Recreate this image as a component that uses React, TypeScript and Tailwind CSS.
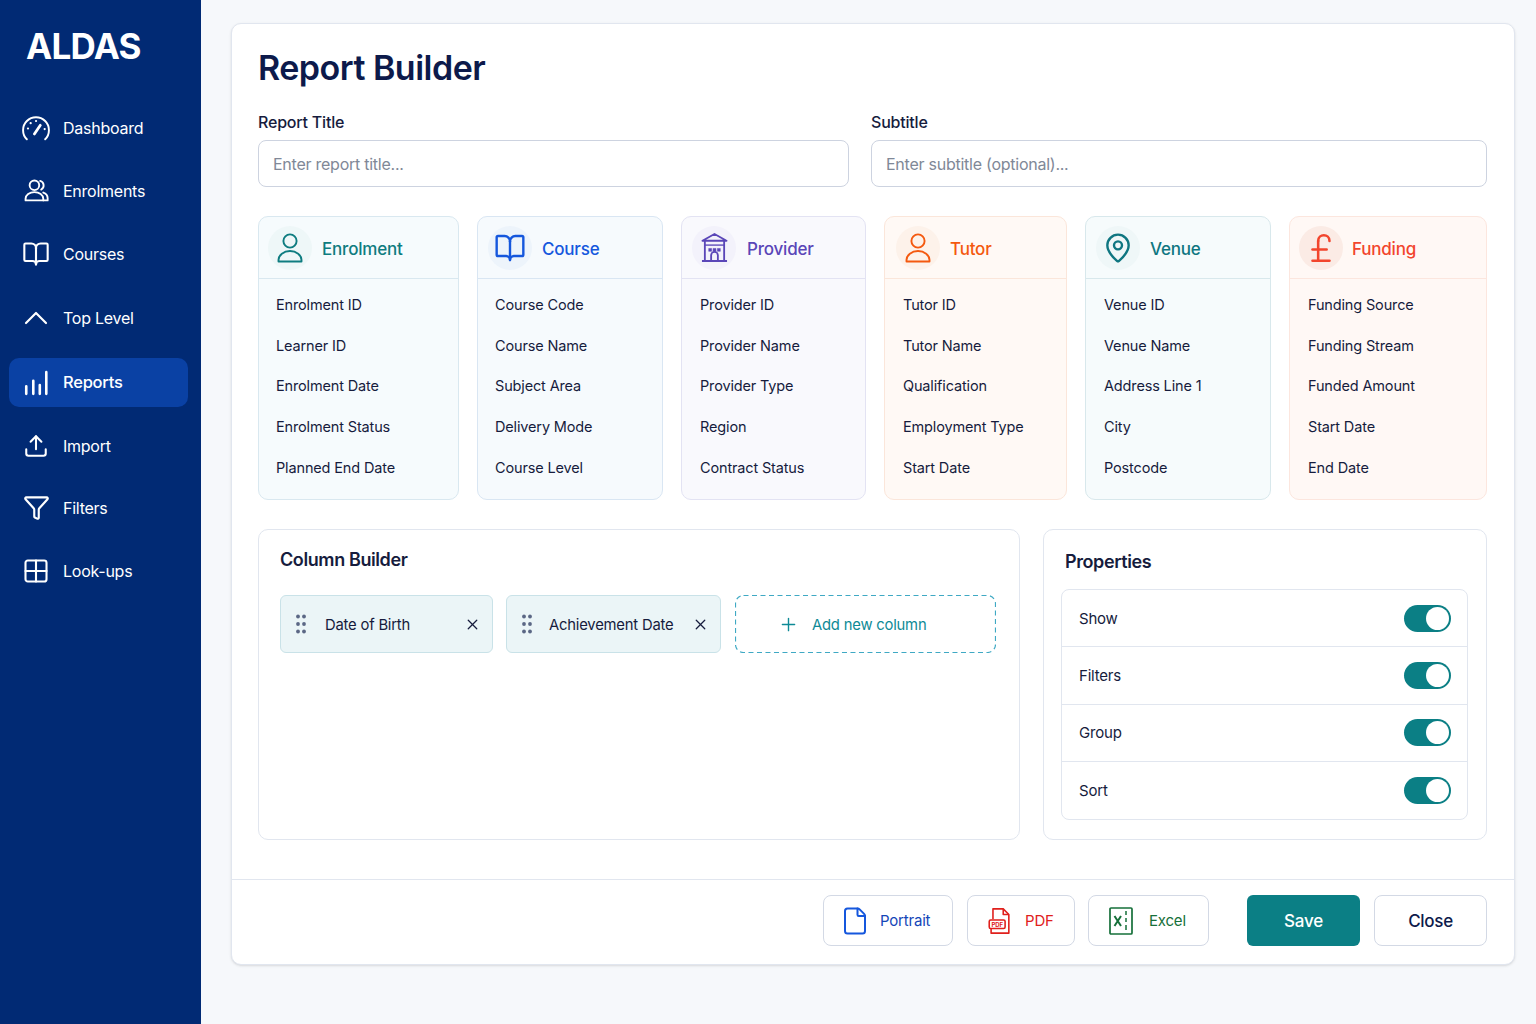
import {
  BookOpen,
  ChevronUp,
  File,
  Funnel,
  Grid2x2,
  MapPin,
  Plus,
  PoundSterling,
  Upload,
  X,
} from "lucide-react";
import type { ReactNode } from "react";

function GaugeIcon() {
  return (
    <svg viewBox="0 0 26 24" className="h-[26px] w-[28px]" fill="none" stroke="currentColor" strokeWidth="1.800" strokeLinecap="round">
      <path d="M4.500 22.500A12 12 0 1 1 21.500 22.500" />
      <path d="M11.500 17.500 17 9.500" strokeWidth="2.600" />
      <path d="M5.500 12.500h.1M8 7.500h.1M13 5.500h.1M21 13h.1" strokeWidth="2" />
    </svg>
  );
}

function UsersIcon() {
  return (
    <svg viewBox="0 0 24 22" className="h-[23px] w-[25px]" fill="none" stroke="currentColor" strokeWidth="1.800" strokeLinejoin="round" strokeLinecap="round">
      <circle cx="10" cy="6" r="4.600" />
      <path d="M1.500 20.500v-1.500a8.500 6.500 0 0 1 17 0v1.500z" />
      <path d="M15.500 1.800a4.500 4.500 0 0 1 1 8.300" />
      <path d="M18.500 13c2.500.8 4.200 3 4.200 5.500v2h-4" />
    </svg>
  );
}

function PersonIcon() {
  return (
    <svg viewBox="0 0 26 30" className="h-[30px] w-[26px]" fill="none" stroke="currentColor" strokeWidth="1.900" strokeLinejoin="round">
      <circle cx="13" cy="8" r="6.600" />
      <path d="M1.500 28.500v-1.500a11.500 9 0 0 1 23 0v1.500z" />
    </svg>
  );
}

function BarsIcon() {
  return (
    <svg viewBox="0 0 24 24" className="h-[26px] w-[26px]" fill="none" stroke="currentColor" strokeWidth="2.400" strokeLinecap="round">
      <path d="M3 22v-7M9.500 22V10M15.500 22V14M21.500 22V2" />
    </svg>
  );
}

function BuildingIcon() {
  return (
    <svg viewBox="0 0 28 32" className="h-[31px] w-[27px]" fill="none" stroke="currentColor" strokeWidth="1.900" strokeLinejoin="round">
      <path d="M1.500 9 14 2l12.500 7z" />
      <path d="M4 9v21M24 9v21M1 30h26" />
      <path d="M4 13.500h20" strokeWidth="1.400" />
      <path d="M8 17h3v3H8zM17 17h3v3h-3zM12.500 17h3v3h-3z" fill="currentColor" strokeWidth="0.500" />
      <path d="M10.500 30v-6a3.500 3.500 0 0 1 7 0v6" />
    </svg>
  );
}

function PdfIcon() {
  return (
    <svg viewBox="0 0 24 30" className="h-[28px] w-[23px] text-[#e0201c]" fill="none" stroke="currentColor" strokeWidth="1.700" strokeLinejoin="round">
      <path d="M5 13V2h11l6 6v20H3v-5" />
      <path d="M16 2v6h6" />
      <rect x="1" y="14" width="17" height="9" rx="1.500" fill="#fff" />
      <text x="9.500" y="21" textAnchor="middle" fontSize="6.500" fontWeight="700" fill="currentColor" stroke="none" fontFamily="Inter, sans-serif">PDF</text>
    </svg>
  );
}

function ExcelIcon() {
  return (
    <svg viewBox="0 0 24 28" className="h-[28px] w-[24px] text-[#16703a]" fill="none" stroke="currentColor" strokeWidth="1.700">
      <rect x="1" y="1" width="22" height="26" rx="1" />
      <path d="M5.500 9 12 19M12 9 5.500 19" strokeWidth="2" />
      <path d="M17 4v4M17 11v4M17 18v5" strokeWidth="1.500" />
    </svg>
  );
}

function DragDots() {
  return (
    <svg viewBox="0 0 10 20" className="h-5 w-[10px] shrink-0 text-[#5b6785]" fill="currentColor">
      <circle cx="2" cy="2.500" r="1.900" />
      <circle cx="8" cy="2.500" r="1.900" />
      <circle cx="2" cy="10" r="1.900" />
      <circle cx="8" cy="10" r="1.900" />
      <circle cx="2" cy="17.500" r="1.900" />
      <circle cx="8" cy="17.500" r="1.900" />
    </svg>
  );
}

const navItems: { label: string; icon: ReactNode; active?: boolean; nudge?: string }[] = [
  { label: "Dashboard", icon: <GaugeIcon /> },
  { label: "Enrolments", icon: <UsersIcon /> },
  { label: "Courses", icon: <BookOpen size={28} strokeWidth={1.8} /> },
  { label: "Top Level", icon: <ChevronUp size={40} strokeWidth={1.3} className="shrink-0" />, nudge: "mt-[1px]" },
  { label: "Reports", icon: <BarsIcon />, active: true, nudge: "mt-[2px]" },
  { label: "Import", icon: <Upload size={26} strokeWidth={1.9} /> },
  { label: "Filters", icon: <Funnel size={27} strokeWidth={1.9} />, nudge: "-mt-[1px]" },
  { label: "Look-ups", icon: <Grid2x2 size={28} strokeWidth={1.8} /> },
];

const entities = [
  {
    title: "Enrolment",
    icon: <PersonIcon />,
    card: "border-[#d9e8f0] bg-[#f6fbfd]",
    divider: "border-[#d9e8f0]",
    color: "text-[#0e7c80]",
    circle: "bg-[#eef7f8]",
    pad: "pl-[9px] gap-[10px]",
    body: "pl-[17px]",
    fields: ["Enrolment ID", "Learner ID", "Enrolment Date", "Enrolment Status", "Planned End Date"],
  },
  {
    title: "Course",
    icon: <BookOpen size={32} strokeWidth={1.8} />,
    card: "border-[#d9e6f3] bg-[#f6fafd]",
    divider: "border-[#d9e6f3]",
    color: "text-[#1557dd]",
    circle: "bg-[#edf4fb]",
    pad: "pl-[10px] gap-[10px]",
    body: "pl-[17px]",
    fields: ["Course Code", "Course Name", "Subject Area", "Delivery Mode", "Course Level"],
  },
  {
    title: "Provider",
    icon: <BuildingIcon />,
    card: "border-[#e3e3f3] bg-[#f9f9fd]",
    divider: "border-[#e3e3f3]",
    color: "text-[#5a46b8]",
    circle: "bg-[#f3f2fb]",
    pad: "pl-[10px] gap-[11px]",
    body: "pl-[18px]",
    fields: ["Provider ID", "Provider Name", "Provider Type", "Region", "Contract Status"],
  },
  {
    title: "Tutor",
    icon: <PersonIcon />,
    card: "border-[#fbe6da] bg-[#fff9f5]",
    divider: "border-[#fbe6da]",
    color: "text-[#f4590f]",
    circle: "bg-[#fdf2ea]",
    pad: "pl-[11px] gap-[10px]",
    body: "pl-[18px]",
    fields: ["Tutor ID", "Tutor Name", "Qualification", "Employment Type", "Start Date"],
  },
  {
    title: "Venue",
    icon: <MapPin size={32} strokeWidth={1.8} />,
    card: "border-[#d8e8ec] bg-[#f6fbfc]",
    divider: "border-[#d8e8ec]",
    color: "text-[#0f7681]",
    circle: "bg-[#eff7f8]",
    pad: "pl-[10px] gap-[10px]",
    body: "pl-[18px]",
    fields: ["Venue ID", "Venue Name", "Address Line 1", "City", "Postcode"],
  },
  {
    title: "Funding",
    icon: <PoundSterling size={34} strokeWidth={1.8} />,
    card: "border-[#fce6de] bg-[#fff8f5]",
    divider: "border-[#fce6de]",
    color: "text-[#f2452d]",
    circle: "bg-[#fbebe5]",
    pad: "pl-[9px] gap-[9px]",
    body: "pl-[18px]",
    fields: ["Funding Source", "Funding Stream", "Funded Amount", "Start Date", "End Date"],
  },
];

const properties = ["Show", "Filters", "Group", "Sort"];

export default function App() {
  return (
    <div className="flex min-h-[1024px] bg-[#f6f8fb] font-['Inter','Liberation_Sans',sans-serif] text-[#161c3d]">
      <aside className="w-[201px] shrink-0 bg-[#012a74] px-[9px] text-white">
        <div className="pl-[17px] pt-[24px] text-[35px] leading-[45px] font-bold tracking-[-0.7px]">ALDAS</div>
        <nav className="mt-[34px] flex flex-col gap-[14px]">
          {navItems.map((item) => (
            <div
              key={item.label}
              className={`flex h-[49px] items-center gap-[13px] rounded-[10px] pl-[13px] tracking-[-0.25px] ${
                item.active ? "w-[179px] bg-[#0a41a4] text-[16.500px] font-medium" : "text-[16px]"
              } ${item.nudge ?? ""}`}
            >
              <span className="flex w-[28px] justify-center">{item.icon}</span>
              {item.label}
            </div>
          ))}
        </nav>
      </aside>

      <main className="flex-1 pb-[60px] pl-[30px] pr-[21px] pt-[23px]">
        <div className="rounded-[10px] border border-[#e1e6ef] bg-white shadow-sm">
          <div className="px-[26px] pb-[39px]">
            <h1 className="pt-[21px] text-[34px] leading-[46px] font-semibold tracking-[-0.5px] text-[#0d1a4b]">Report Builder</h1>

            <div className="mt-[19px] grid grid-cols-[591px_616px] gap-x-[22px]">
              {[
                ["Report Title", "Enter report title..."],
                ["Subtitle", "Enter subtitle (optional)..."],
              ].map(([label, placeholder]) => (
                <div key={label}>
                  <div className="text-[16px] leading-[24px] font-medium tracking-[-0.2px]">{label}</div>
                  <div className="mt-[6px] flex h-[47px] items-center rounded-[8px] border border-[#cdd3e0] px-[14px] text-[16px] tracking-[-0.25px] text-[#808897]">
                    {placeholder}
                  </div>
                </div>
              ))}
            </div>

            <div className="mt-[29px] grid grid-cols-[201px_186px_185px_183px_186px_198px] gap-x-[18px]">
              {entities.map((entity) => (
                <div key={entity.title} className={`h-[284px] rounded-[10px] border ${entity.card}`}>
                  <div className={`flex h-[62px] items-center border-b ${entity.divider} ${entity.pad}`}>
                    <span className={`flex h-[44px] w-[44px] items-center justify-center rounded-full ${entity.circle} ${entity.color}`}>
                      {entity.icon}
                    </span>
                    <span className={`pt-[4px] text-[17px] font-medium tracking-[-0.2px] ${entity.color}`}>{entity.title}</span>
                  </div>
                  <ul className={`flex flex-col gap-[16.700px] pt-[14px] text-[14.500px] leading-[24px] tracking-[-0.15px] ${entity.body}`}>
                    {entity.fields.map((field) => (
                      <li key={field}>{field}</li>
                    ))}
                  </ul>
                </div>
              ))}
            </div>

            <div className="mt-[29px] grid grid-cols-[762px_444px] gap-x-[23px]">
              <section className="h-[311px] rounded-[10px] border border-[#e1e6ef] px-[21px]">
                <h2 className="pt-[17px] text-[18px] leading-[26px] font-semibold tracking-[-0.4px]">Column Builder</h2>
                <div className="mt-[22px] flex gap-[13px]">
                  <div className="flex h-[58px] w-[213px] items-center rounded-[6px] border border-[#c9e2e8] bg-[#ebf5f7] pl-[15px] pr-[11px] text-[14.800px] tracking-[-0.2px]">
                    <DragDots />
                    <span className="ml-[19px] flex-1 pt-[2px]">Date of Birth</span>
                    <X size={17} strokeWidth={1.8} />
                  </div>
                  <div className="flex h-[58px] w-[215px] items-center rounded-[6px] border border-[#c9e2e8] bg-[#ebf5f7] pl-[15px] pr-[11px] text-[14.800px] tracking-[-0.2px]">
                    <DragDots />
                    <span className="ml-[17px] flex-1 pt-[2px]">Achievement Date</span>
                    <X size={17} strokeWidth={1.8} />
                  </div>
                  <div className="relative ml-[1px] flex h-[58px] w-[261px] items-center pl-[43px] text-[14.800px] tracking-[-0.2px] text-[#0e8a96]">
                    <svg className="absolute inset-0 h-full w-full" fill="none">
                      <rect x="0.500" y="0.500" width="260" height="57" rx="8" stroke="#3fa9c4" strokeWidth="1.200" strokeDasharray="5 3.500" />
                    </svg>
                    <Plus size={21} strokeWidth={1.6} />
                    <span className="ml-[13px] pt-[2px]">Add new column</span>
                  </div>
                </div>
              </section>

              <section className="h-[311px] rounded-[10px] border border-[#e1e6ef] pl-[17px] pr-[18px]">
                <h2 className="pl-[4px] pt-[19px] text-[18px] leading-[26px] font-semibold tracking-[-0.4px]">Properties</h2>
                <div className="mt-[14px] divide-y divide-[#e1e6ef] rounded-[8px] border border-[#e1e6ef]">
                  {properties.map((name) => (
                    <div key={name} className="flex h-[57.250px] items-center justify-between pl-[17px] pr-[16px] text-[15px] tracking-[-0.2px]">
                      <span className="pt-[2px]">{name}</span>
                      <span className="flex h-[27px] w-[47px] items-center justify-end rounded-full bg-[#0b7f85] pr-[2px]">
                        <span className="h-[23px] w-[23px] rounded-full bg-white" />
                      </span>
                    </div>
                  ))}
                </div>
              </section>
            </div>
          </div>

          <footer className="flex h-[85px] items-center justify-end gap-[13px] border-t border-[#e1e6ef] pb-[3px] pr-[27px]">
            <button className="flex h-[51px] w-[130px] items-center gap-[10px] rounded-[8px] border border-[#d3d9e5] pl-[16px] text-[15px] tracking-[-0.2px] text-[#1446b8]">
              <File size={30} strokeWidth={1.6} className="text-[#1557dd]" />
              <span className="pt-[1px]">Portrait</span>
            </button>
            <button className="ml-[1px] flex h-[51px] w-[108px] items-center gap-[14px] rounded-[8px] border border-[#d3d9e5] pl-[20px] text-[15px] tracking-[-0.2px] text-[#e0201c]">
              <PdfIcon />
              <span className="pt-[1px]">PDF</span>
            </button>
            <button className="flex h-[51px] w-[121px] items-center gap-[16px] rounded-[8px] border border-[#d3d9e5] pl-[20px] text-[15px] tracking-[-0.2px] text-[#16703a]">
              <ExcelIcon />
              <span className="pt-[1px]">Excel</span>
            </button>
            <button className="ml-[25px] h-[51px] w-[113px] rounded-[6px] bg-[#0b7f85] pt-[2px] text-[17px] font-medium tracking-[-0.2px] text-white">
              Save
            </button>
            <button className="ml-[1px] h-[51px] w-[113px] rounded-[8px] border border-[#d3d9e5] pt-[2px] text-[17px] font-medium tracking-[-0.3px] text-[#0d1a4b]">
              Close
            </button>
          </footer>
        </div>
      </main>
    </div>
  );
}
